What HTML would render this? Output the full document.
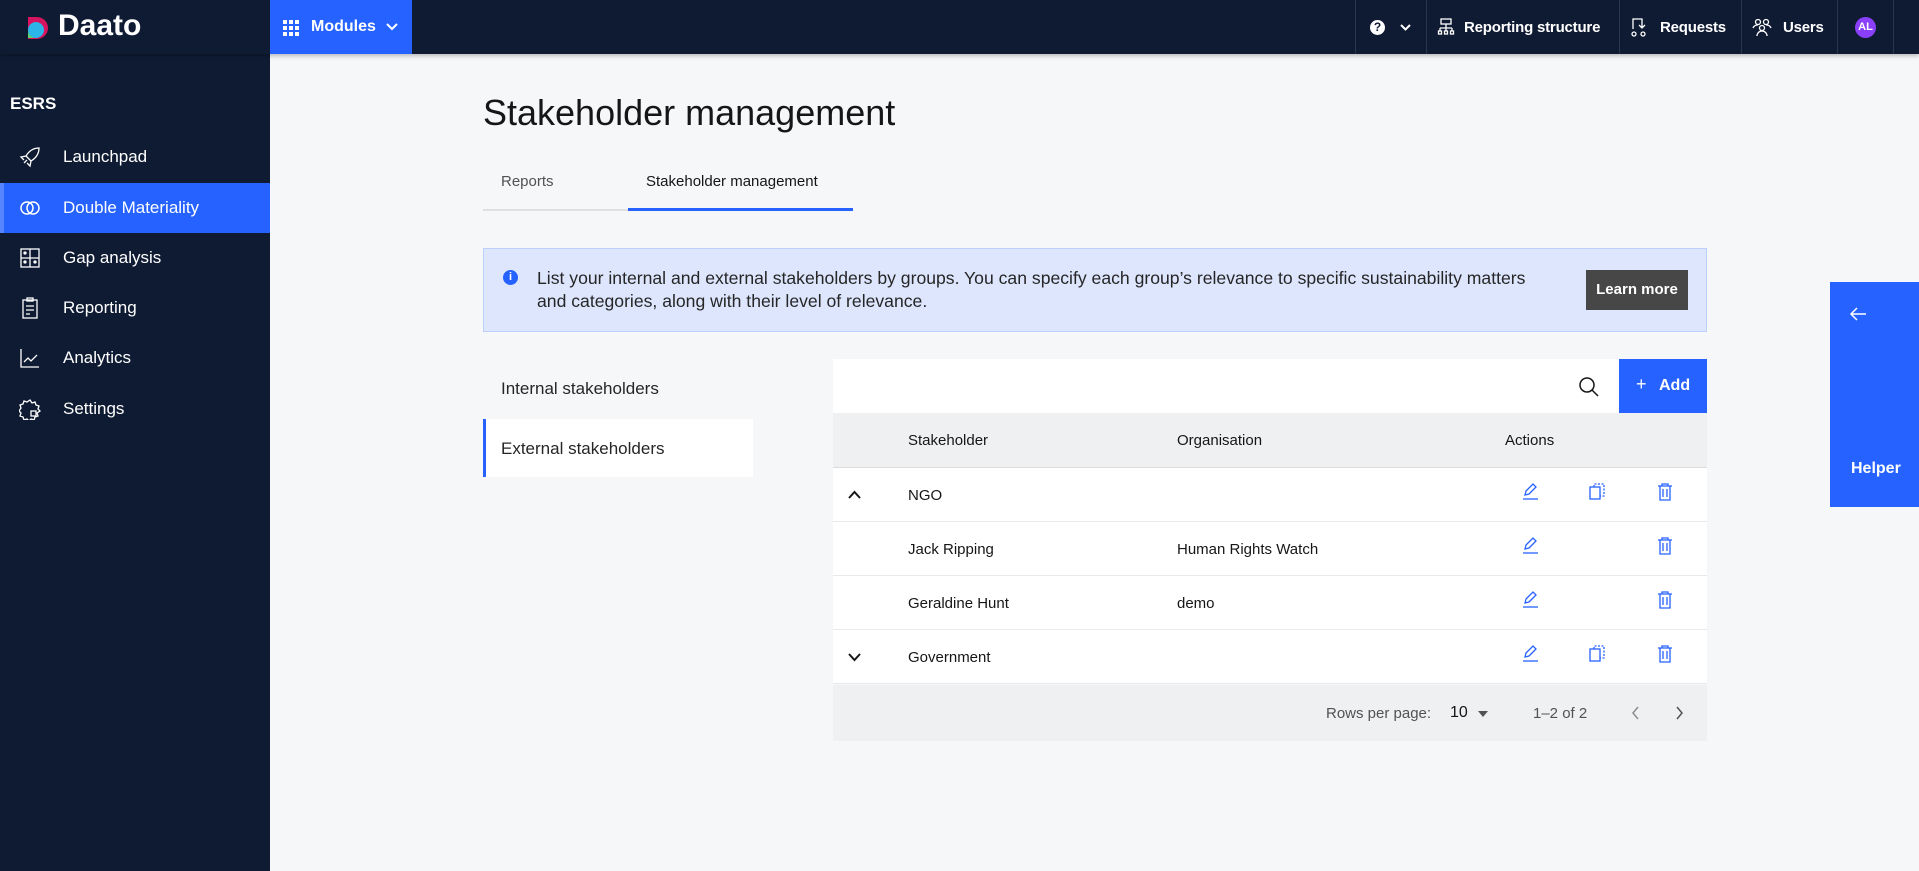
<!DOCTYPE html>
<html><head><meta charset="utf-8">
<style>
*{box-sizing:border-box;margin:0;padding:0}
body{width:1919px;height:871px;overflow:hidden;background:#f6f7f9;font-family:"Liberation Sans",sans-serif;color:#161616;position:relative}
.top{position:absolute;left:0;top:0;width:1919px;height:54px;background:#0f1b33;box-shadow:0 2px 4px rgba(0,0,0,.25);z-index:3}
.side{position:absolute;left:0;top:54px;width:270px;height:817px;background:#0f1b33}
.abs{position:absolute}
.nav{position:absolute;left:0;width:270px;height:50px;color:#fff;font-size:17px;display:flex;align-items:center}
.nav span{position:absolute;left:63px}
.nav svg{position:absolute;left:19px}
.sep{position:absolute;top:0;width:1px;height:54px;background:#2a3650}
.tr{position:absolute;top:0;height:54px;color:#fff;font-size:15px;font-weight:bold;display:flex;align-items:center;letter-spacing:-0.2px}
.row{position:absolute;left:833px;width:874px;height:54px;background:#fff;border-bottom:1px solid #e8e9eb;font-size:15px}
.row .t{position:absolute;top:19px}
</style></head><body>
<div class="top">
  <svg class="abs" style="left:28px;top:17px" width="21" height="22" viewBox="0 0 21 22"><path d="M0 0h9a11 11 0 0 1 0 22H0z" fill="#d6145f"/><circle cx="8" cy="13" r="8" fill="#2bb5e8"/><path d="M0 13a8 8 0 0 0 8 8H0z" fill="#54d86f"/></svg>
  <div class="abs" style="left:58px;top:9px;color:#fff;font-size:30px;font-weight:bold;letter-spacing:0px">Daato</div>
  <div class="abs" style="left:270px;top:0;width:142px;height:54px;background:#2662ff;color:#fff;font-size:16px;font-weight:bold">
    <svg class="abs" style="left:13px;top:20px" width="16" height="16" viewBox="0 0 16 16" fill="#fff"><rect x="0" y="0" width="4" height="4"/><rect x="6" y="0" width="4" height="4"/><rect x="12" y="0" width="4" height="4"/><rect x="0" y="6" width="4" height="4"/><rect x="6" y="6" width="4" height="4"/><rect x="12" y="6" width="4" height="4"/><rect x="0" y="12" width="4" height="4"/><rect x="6" y="12" width="4" height="4"/><rect x="12" y="12" width="4" height="4"/></svg>
    <span class="abs" style="left:41px;top:18px">Modules</span>
    <svg class="abs" style="left:116px;top:23px" width="12" height="8" viewBox="0 0 12 8"><path d="M1 1l5 5 5-5" stroke="#fff" stroke-width="2" fill="none"/></svg>
  </div>
  <div class="sep" style="left:1355px"></div><div class="sep" style="left:1426px"></div><div class="sep" style="left:1619px"></div><div class="sep" style="left:1741px"></div><div class="sep" style="left:1837px"></div><div class="sep" style="left:1893px"></div>
  <div class="abs" style="left:1370px;top:20px;width:15px;height:15px;border-radius:50%;background:#fff;color:#0f1b33;font-size:12px;font-weight:bold;text-align:center;line-height:15px">?</div>
  <svg class="abs" style="left:1400px;top:24px" width="11" height="7" viewBox="0 0 11 7"><path d="M1 1l4.5 4.5L10 1" stroke="#fff" stroke-width="2" fill="none"/></svg>
  <svg class="abs" style="left:1437px;top:18px" width="18" height="18" viewBox="0 0 18 18" fill="none" stroke="#fff" stroke-width="1.3"><rect x="4" y="1" width="10" height="5"/><path d="M9 6v4M3 10h12M3 10v3M9 10v3M15 10v3"/><rect x="1.5" y="13" width="3" height="3"/><rect x="7.5" y="13" width="3" height="3"/><rect x="13.5" y="13" width="3" height="3"/></svg>
  <div class="tr" style="left:1464px">Reporting structure</div>
  <svg class="abs" style="left:1631px;top:17px" width="18" height="20" viewBox="0 0 18 20" fill="none" stroke="#fff" stroke-width="1.3"><path d="M2 12V2h9v9M8 8l3 3 3-3"/><circle cx="3" cy="17" r="2"/><circle cx="12" cy="17" r="2"/></svg>
  <div class="tr" style="left:1660px">Requests</div>
  <svg class="abs" style="left:1752px;top:17px" width="20" height="20" viewBox="0 0 20 20" fill="none" stroke="#fff" stroke-width="1.3"><circle cx="6" cy="5" r="2.5"/><circle cx="14" cy="5" r="2.5"/><circle cx="10" cy="11" r="2.5"/><path d="M1 11a5 5 0 0 1 5-3M19 11a5 5 0 0 0-5-3M5 19a5 5 0 0 1 10 0"/></svg>
  <div class="tr" style="left:1783px">Users</div>
  <div class="abs" style="left:1855px;top:17px;width:21px;height:21px;border-radius:50%;background:#8a3ffc;color:#fff;font-size:11px;font-weight:bold;text-align:center;line-height:21px">AL</div>
</div>

<div class="side">
  <div class="abs" style="left:10px;top:40px;color:#fff;font-weight:bold;font-size:17px">ESRS</div>
  <div class="nav" style="top:78px"><svg width="22" height="22" viewBox="0 0 22 22" fill="none" stroke="#fff" stroke-width="1.3"><path d="M20 2c-6 0-10 3-13 8l5 5c5-3 8-7 8-13zM7 10l-5 1 3 3M12 15l-1 5-3-3M8 14l-3 3"/></svg><span>Launchpad</span></div>
  <div class="nav" style="top:129px;background:#2662ff;border-left:4px solid #5585ff"><svg width="22" height="22" viewBox="0 0 22 22" fill="none" stroke="#fff" stroke-width="1.5" style="left:15px"><circle cx="8" cy="11" r="6"/><circle cx="14" cy="11" r="6"/></svg><span style="left:59px">Double Materiality</span></div>
  <div class="nav" style="top:179px"><svg width="22" height="22" viewBox="0 0 22 22" fill="none" stroke="#fff" stroke-width="1.3"><rect x="2" y="2" width="18" height="18"/><path d="M11 2v18M2 11h18"/><circle cx="6" cy="15" r="1" fill="#fff"/><circle cx="16" cy="15" r="1" fill="#fff"/><circle cx="6" cy="6" r="1" fill="#fff"/></svg><span>Gap analysis</span></div>
  <div class="nav" style="top:229px"><svg width="22" height="22" viewBox="0 0 22 22" fill="none" stroke="#fff" stroke-width="1.3"><rect x="4" y="3" width="14" height="18"/><rect x="8" y="1" width="6" height="3"/><path d="M7 9h8M7 13h8M7 17h4"/></svg><span>Reporting</span></div>
  <div class="nav" style="top:279px"><svg width="22" height="22" viewBox="0 0 22 22" fill="none" stroke="#fff" stroke-width="1.3"><path d="M2 2v18h18M5 15l4-4 3 3 6-6"/></svg><span>Analytics</span></div>
  <div class="nav" style="top:330px"><svg width="22" height="22" viewBox="0 0 22 22" fill="none" stroke="#fff" stroke-width="1.3"><path d="M11 2l2 3 3-1 1 3 3 1-1 3 2 2-3 2 1 3-3 1-1 3-3-1-2 2-2-2-3 1-1-3-3-1 1-3-2-2 2-3-1-3 3-1 1-3 3 1z"/><rect x="12" y="13" width="5" height="5"/></svg><span>Settings</span></div>
</div>

<div class="abs" style="left:483px;top:92px;font-size:36px;font-weight:300;color:#161616">Stakeholder management</div>
<div class="abs" style="left:501px;top:173px;font-size:15px;color:#525252">Reports</div>
<div class="abs" style="left:646px;top:173px;font-size:15px;color:#161616">Stakeholder management</div>
<div class="abs" style="left:483px;top:209px;width:145px;height:2px;background:#e0e0e0"></div>
<div class="abs" style="left:628px;top:208px;width:225px;height:3px;background:#2662ff"></div>

<div class="abs" style="left:483px;top:248px;width:1224px;height:84px;background:#dde6fd;border:1px solid #bcd0fb"></div>
<div class="abs" style="left:503px;top:270px;width:15px;height:15px;border-radius:50%;background:#2662ff;color:#fff;font-size:11px;font-weight:bold;text-align:center;line-height:15px">i</div>
<div class="abs" style="left:537px;top:267px;font-size:17.6px;line-height:23px;color:#262626">List your internal and external stakeholders by groups. You can specify each group’s relevance to specific sustainability matters<br>and categories, along with their level of relevance.</div>
<div class="abs" style="left:1586px;top:270px;width:102px;height:40px;background:#474747;color:#fff;font-size:15px;font-weight:bold;text-align:center;line-height:40px">Learn more</div>

<div class="abs" style="left:501px;top:379px;font-size:17px;color:#262626">Internal stakeholders</div>
<div class="abs" style="left:483px;top:419px;width:270px;height:58px;background:#fff;border-left:3px solid #2662ff"></div>
<div class="abs" style="left:501px;top:439px;font-size:17px;color:#262626">External stakeholders</div>

<div class="abs" style="left:833px;top:359px;width:874px;height:54px;background:#fff"></div>
<svg class="abs" style="left:1578px;top:376px" width="22" height="22" viewBox="0 0 22 22" fill="none" stroke="#161616" stroke-width="1.5"><circle cx="9" cy="9" r="7"/><path d="M14 14l6 6"/></svg>
<div class="abs" style="left:1619px;top:359px;width:88px;height:54px;background:#2662ff;color:#fff;font-size:16px;font-weight:bold"><span class="abs" style="left:17px;top:15px;font-weight:normal;font-size:18px">+</span><span class="abs" style="left:40px;top:18px">Add</span></div>
<div class="abs" style="left:833px;top:413px;width:874px;height:55px;background:#eff0f2;border-bottom:1px solid #dcdcdc;font-size:15px">
  <span class="abs" style="left:75px;top:19px">Stakeholder</span><span class="abs" style="left:344px;top:19px">Organisation</span><span class="abs" style="left:672px;top:19px">Actions</span>
</div>
<div class="row" style="top:468px"><svg class="abs" style="left:15px;top:22px" width="13" height="9" viewBox="0 0 13 9"><path d="M1 8l5.5-6L12 8" stroke="#161616" stroke-width="2" fill="none"/></svg><span class="t" style="left:75px">NGO</span></div>
<div class="row" style="top:522px"><span class="t" style="left:75px">Jack Ripping</span><span class="t" style="left:344px">Human Rights Watch</span></div>
<div class="row" style="top:576px"><span class="t" style="left:75px">Geraldine Hunt</span><span class="t" style="left:344px">demo</span></div>
<div class="row" style="top:630px"><svg class="abs" style="left:15px;top:23px" width="13" height="9" viewBox="0 0 13 9"><path d="M1 1l5.5 6L12 1" stroke="#161616" stroke-width="2" fill="none"/></svg><span class="t" style="left:75px">Government</span></div>

<svg width="0" height="0" style="position:absolute"><defs>
<g id="ed" fill="none" stroke="#2662ff" stroke-width="1.3"><path d="M4 13l1-4 7-7 3 3-7 7z"/><path d="M2 17h15"/></g>
<g id="cp" fill="none" stroke="#2662ff" stroke-width="1.3"><rect x="2" y="5" width="10" height="12"/><path d="M6 5V2h10v12h-4" stroke-dasharray="2 1.5"/></g>
<g id="tr" fill="none" stroke="#2662ff" stroke-width="1.3"><path d="M3 4h14M7 4V2h6v2M5 4v14h10V4M8 7v8M12 7v8"/></g>
</defs></svg>
<svg class="abs" style="left:1521px;top:482px" width="20" height="20"><use href="#ed"/></svg>
<svg class="abs" style="left:1588px;top:482px" width="20" height="20"><use href="#cp"/></svg>
<svg class="abs" style="left:1655px;top:482px" width="20" height="20"><use href="#tr"/></svg>
<svg class="abs" style="left:1521px;top:536px" width="20" height="20"><use href="#ed"/></svg>
<svg class="abs" style="left:1655px;top:536px" width="20" height="20"><use href="#tr"/></svg>
<svg class="abs" style="left:1521px;top:590px" width="20" height="20"><use href="#ed"/></svg>
<svg class="abs" style="left:1655px;top:590px" width="20" height="20"><use href="#tr"/></svg>
<svg class="abs" style="left:1521px;top:644px" width="20" height="20"><use href="#ed"/></svg>
<svg class="abs" style="left:1588px;top:644px" width="20" height="20"><use href="#cp"/></svg>
<svg class="abs" style="left:1655px;top:644px" width="20" height="20"><use href="#tr"/></svg>

<div class="abs" style="left:833px;top:685px;width:874px;height:56px;background:#eff0f2;font-size:15px;color:#525252">
  <span class="abs" style="left:493px;top:20px">Rows per page:</span>
  <span class="abs" style="left:617px;top:19px;color:#161616;font-size:16px">10</span>
  <svg class="abs" style="left:645px;top:26px" width="10" height="6"><path d="M0 0h10L5 6z" fill="#525252"/></svg>
  <span class="abs" style="left:700px;top:20px">1–2 of 2</span>
  <svg class="abs" style="left:797px;top:20px" width="10" height="16"><path d="M8 2L3 8l5 6" stroke="#8d8d8d" stroke-width="1.5" fill="none"/></svg>
  <svg class="abs" style="left:842px;top:20px" width="10" height="16"><path d="M2 2l5 6-5 6" stroke="#525252" stroke-width="1.5" fill="none"/></svg>
</div>

<div class="abs" style="left:1830px;top:282px;width:89px;height:225px;background:#2662ff;color:#fff">
  <svg class="abs" style="left:19px;top:24px" width="18" height="16" viewBox="0 0 18 16"><path d="M8 2L2 8l6 6M2 8h15" stroke="#fff" stroke-width="1.5" fill="none"/></svg>
  <span class="abs" style="left:21px;top:178px;font-size:16px;font-weight:bold">Helper</span>
</div>
</body></html>
